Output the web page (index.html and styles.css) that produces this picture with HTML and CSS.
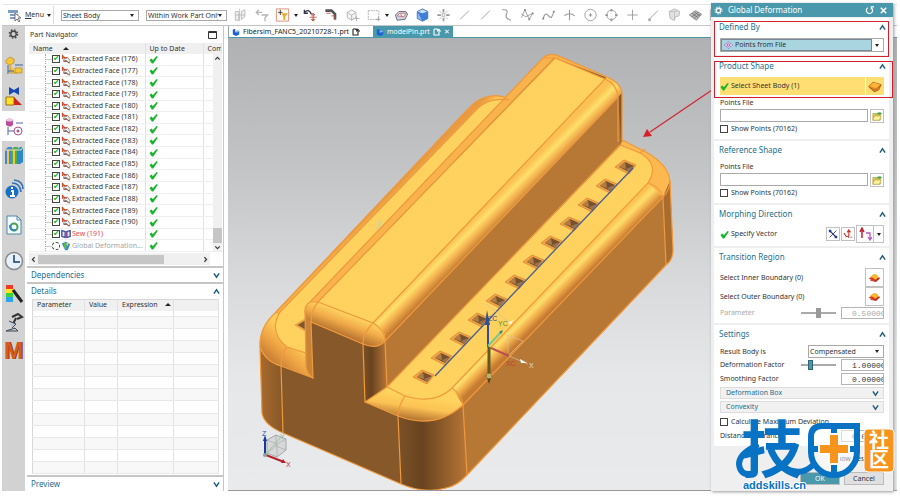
FILE: index.html
```html
<!DOCTYPE html>
<html lang="en">
<head>
    <title>Global Deformation</title>
    <meta charset="UTF-8">
    <link rel="stylesheet" href="styles.css">
</head>
<body>

<!-- shared icons -->
<svg class="defs" aria-hidden="true">
    <symbol id="tick" viewBox="0 0 10 10"><path d="M.5 5.500 3 4 4.200 5.800 8.500 1 9.800 2 4.700 9.500 3.200 9.500Z" fill="#17b52b"/></symbol>
    <symbol id="face" viewBox="0 0 12 12"><path d="M4 5 8 4 11 8 10 11 7 8 3 8Z" fill="#eee" stroke="#777"/><path d="M2 1v5M1 2l3 1M3 4l4 1" stroke="#d8442b" stroke-width="1.5" fill="none"/><path d="M5 8l5 3M3 9h3" stroke="#8a4a3a"/></symbol>
    <symbol id="up" viewBox="0 0 8 8"><path d="M1 6.5 4 2 7 6.5" fill="none" stroke="#205c7c" stroke-width="1.6"/></symbol>
    <symbol id="down" viewBox="0 0 8 8"><path d="M1 1.5 4 6 7 1.5" fill="none" stroke="#205c7c" stroke-width="1.6"/></symbol>
    <symbol id="folder" viewBox="0 0 12 12"><path d="M1 3h4l1 1h4v7H1Z" fill="#d9c84e" stroke="#9a8b2c" stroke-width=".6"/><path d="M3 6h8l-2 5H1Z" fill="#fff29a" stroke="#a69632" stroke-width=".6"/><path d="M5 4q1-3 4-2V1l3 2-3 2V4Q7 3 5 4" fill="#48a33a"/></symbol>
    <symbol id="part" viewBox="0 0 10 10"><path d="M1 2 4 1v4l3-2 2 1v4L5 10 1 8Z" fill="#1e62cf"/><path d="M4 5l3-2 2 1-3 2Z" fill="#8fc0ff"/></symbol>
    <symbol id="page" viewBox="0 0 8 8"><path d="M1 1h3v1M1 1v6h5V4M4 1l2 2H4" fill="none" stroke="currentColor" stroke-width="1.1"/><path d="M5 1l2 1v2" fill="none" stroke="currentColor"/></symbol>
    <symbol id="patch" viewBox="0 0 16 12"><path d="M1 7 6 3l9 3-5 5Z" fill="#d8351f"/><path d="M2 5 7 1q5 0 6 4L9 8Q6 5 2 5" fill="#f8b82d"/><path d="M3 9l6 1 5-4" fill="none" stroke="#a62116"/></symbol>
</svg>

<div class="app">
    <header class="toolbar">
        <button class="menu" type="button">
            <svg width="14" height="13" viewBox="0 0 14 13"><path d="M0 1h10v3H0zM2 5h8v2H2zM2 8h7v2H2z" fill="#7d9dc5"/><path d="M7 4v8l2-2 2 3 1-1-2-3h3Z" fill="#fff" stroke="#555" stroke-width=".8"/></svg>
            <span><u>M</u>enu</span><i class="caret"></i>
        </button>
        <span class="pick type"><select aria-label="Type filter"><option>Sheet Body</option></select></span>
        <span class="pick scope"><select aria-label="Selection scope"><option>Within Work Part Only</option></select></span>
        <nav class="tools" aria-label="Selection tools">
            <svg viewBox="0 0 16 16"><path d="M2 4h4v10H2ZM9 4l4-2v8l-4 3ZM7 1v14M2 8h11" fill="#eee" stroke="#b9b9b9"/></svg>
            <svg viewBox="0 0 16 16"><path d="M2 5h7M5 2 2 5l3 3M8 8h7l-3 3v4" fill="none" stroke="#b5b5b5" stroke-width="1.5"/></svg>
            <svg viewBox="0 0 16 16"><path d="M1 1h14v14H1Z" fill="#fff9ef" stroke="#d78877"/><path d="M3 5h5M5.500 2v6" stroke="#333"/><path d="M7 6h7l-3 4v4l-2-1v-3Z" fill="#eda72c"/></svg>
            <i class="caret"></i>
            <svg viewBox="0 0 16 16"><path d="M1 5q5-5 8 2M1 2v4h4" fill="none" stroke="#334"  stroke-width="1.5"/><path d="M11 6v9M7 10.500h8M11 6l-2 2h4ZM11 15l-2-2h4Z" stroke="#ba4a45" fill="none"/></svg>
            <svg viewBox="0 0 16 16"><path d="M1 3h7l4 4v6" fill="none" stroke="#555" stroke-width="3"/><path d="M8 9h4v5M2 6h5" stroke="#bd5248" fill="none"/></svg>
            <svg viewBox="0 0 16 16"><path d="m2 5 5-3 5 3v6l-5 3-5-3ZM2 5l5 3 5-3M7 8v6" fill="#f2f2f2" stroke="#b1b1b1"/><path d="M9 12h7M12.500 9v6" stroke="#aaa"/></svg>
            <svg viewBox="0 0 16 16"><path d="M2 3h12v10H2Z" fill="none" stroke="#aaa" stroke-dasharray="2 1"/><path d="M11 13h5M13.500 10v5" stroke="#999"/></svg>
            <i class="caret"></i>
            <svg viewBox="0 0 16 16"><path d="m1 8 4-4h8l2 3-3 6-9 1Z" fill="#ccd2dd" stroke="#667"/><path d="m3 9 3-3h7l-2 4ZM7 7l2 3" fill="#eee" stroke="#c07070"/></svg>
            <svg viewBox="0 0 16 16"><path d="m2 4 6-3 6 3v8l-6 3-6-3Z" fill="#8eb8f4" stroke="#416bb6"/><path d="m2 4 6 2 6-2v8l-6 3Z" fill="#417ed7"/><path d="m3 4 5-2 5 2-5 2Z" fill="#cde1ff"/></svg>
            <svg viewBox="0 0 16 16"><path d="M8 1v4M8 11v4M1 8h4M11 8h4" stroke="#999" stroke-width="2"/><path d="M3 3l3 3M13 3l-3 3M3 13l3-3M13 13l-3-3" stroke="#bbb"/><path d="M6.500 6.500h3v3h-3Z" fill="none" stroke="#aaa"/></svg>
            <svg viewBox="0 0 16 16"><path d="M3 13 13 3" stroke="#999"/></svg>
            <svg viewBox="0 0 16 16"><path d="M3 13 13 3" stroke="#999"/></svg>
            <svg viewBox="0 0 16 16"><path d="M3 2h3q4 0 2 5t5 7" fill="none" stroke="#999" stroke-width="1.300"/></svg>
            <svg viewBox="0 0 16 16"><path d="M1 11 5 2l5 11 4-7M1 7l5 3 8-4" fill="none" stroke="#999"/><path d="M4 1h2v2H4ZM9 12h2v2H9ZM13 5h2v2h-2Z" fill="#888"/></svg>
            <svg viewBox="0 0 16 16"><path d="M2 12q2-8 6-3t6-5" fill="none" stroke="#999" stroke-width="1.300"/><path d="M1 11h2v2H1ZM13 3h2v2h-2Z" fill="#888"/></svg>
            <svg viewBox="0 0 16 16"><path d="M2 9q6-5 12 0M8 2v12" fill="none" stroke="#999" stroke-width="1.200"/></svg>
            <svg viewBox="0 0 16 16"><circle cx="8" cy="8" r="6.500" fill="none" stroke="#999"/><path d="M6 8h4M8 6v4" stroke="#888"/></svg>
            <svg viewBox="0 0 16 16"><circle cx="8" cy="8" r="5.500" fill="none" stroke="#999"/><path d="M7 1h2v3H7ZM7 12h2v3H7ZM1 7h3v2H1ZM12 7h3v2h-3Z" fill="#999"/></svg>
            <svg viewBox="0 0 16 16"><path d="M2 8h12M8 2v12" stroke="#999"/></svg>
            <svg viewBox="0 0 16 16"><path d="M3 13 13 3" stroke="#999"/><path d="M2 12h3v3H2Z" fill="#aaa"/></svg>
            <svg viewBox="0 0 16 16"><path d="M2 4 8 1l6 3-1 5-4 1-1 4-5-2Z" fill="#e2e2e2" stroke="#b5b5b5"/><path d="M3 4q6 1 9-1M8 5v9" fill="none" stroke="#bbb"/></svg>
            <svg viewBox="0 0 16 16"><path d="m1 8 7-5 7 4-6 7Z" fill="#bbb" stroke="#888"/><path d="m4 6 7 5M6 4l7 5M4 10l7-5M6 12l7-5" stroke="#777"/></svg>
            <svg viewBox="0 0 16 16"><path d="M1 2h9v12H1ZM1 6h9M1 10h9" fill="#eee" stroke="#aaa"/></svg>
        </nav>
    </header>

    <main class="workspace">
        <nav class="rail" aria-label="Resource bar">
            <button type="button" class="gear" aria-label="Settings"><svg viewBox="0 0 20 20"><circle cx="10" cy="10" r="5" fill="none" stroke="#444" stroke-width="2.500"/><circle cx="10" cy="10" r="7.500" fill="none" stroke="#444" stroke-width="2.500" stroke-dasharray="3 2.890"/></svg></button>
            <button type="button" aria-label="Assembly Navigator"><svg viewBox="0 0 20 20"><path d="m2 4 4-3 4 2v4L6 9 2 7ZM6 9v8h7M11 12h7v5h-7Z" fill="#f5c53a" stroke="#b98a1e" stroke-width=".7"/><path d="M4 9v9M4 15h6M11 9h8" stroke="#3c60a8" fill="none"/></svg></button>
            <button type="button" aria-label="Constraint Navigator"><svg viewBox="0 0 20 20"><path d="M5 1v8l5-3 5 3V1l-5 3Z" fill="#1747b5"/><path d="M2 11h8v8H2Z" fill="#ffe328" stroke="#986e10"/><path d="m10 11 8 8h-8Z" fill="#cf2720"/></svg></button>
            <button type="button" class="on" aria-label="Part Navigator"><svg viewBox="0 0 20 20"><path d="M2 4q4-3 7 0v5q-3 3-7 0Z" fill="#bb4c9c"/><ellipse cx="5.500" cy="4" rx="3.500" ry="1.500" fill="#eec5df"/><path d="M4 11v8M4 15h6M12 7h7" stroke="#5264a5" fill="none"/><circle cx="14" cy="15" r="4" fill="#fff" stroke="#b0508f"/><circle cx="14" cy="15" r="1.500" fill="#b0508f"/></svg></button>
            <button type="button" aria-label="Reuse Library"><svg viewBox="0 0 20 20"><path d="m1 4 3-3h4v17H1Z" fill="#4384d3"/><path d="m7 4 3-3h4v17H7Z" fill="#4eae4d"/><path d="m13 4 3-3h3v15l-3 2h-3Z" fill="#2d8bc3"/><path d="M4 4v14M10 4v14" stroke="#f5c73c" stroke-width="2"/><path d="M1 4h16l2-3" stroke="#ffe5a1" fill="none"/></svg></button>
            <button type="button" class="tall" aria-label="HD3D Tools"><svg viewBox="0 0 20 20"><circle cx="8" cy="13" r="6.500" fill="#1770c6"/><path d="M8 8v2M7 12h2v5M6 17h5" stroke="#fff" stroke-width="2" fill="none"/><path d="M8 4q8 0 9 9M10 1q9 1 9 9" fill="none" stroke="#3472b7" stroke-width="1.700"/></svg></button>
            <button type="button" class="tall" aria-label="Web Browser"><svg viewBox="0 0 20 20"><path d="M3 1h10l4 4v14H3Z" fill="#f4f9fc" stroke="#4d89a8"/><path d="M13 1v4h4" fill="none" stroke="#4d89a8"/><circle cx="10" cy="12" r="3.500" fill="none" stroke="#4ba15b" stroke-width="2"/><path d="M6 10q0 6 6 5" fill="none" stroke="#3786bc" stroke-width="2"/></svg></button>
            <button type="button" class="tall" aria-label="History"><svg viewBox="0 0 20 20"><circle cx="10" cy="10" r="8.500" fill="#e7f1fa" stroke="#888" stroke-width="1.500"/><path d="M10 4v7h6" stroke="#1d3966" fill="none" stroke-width="1.500"/></svg></button>
            <button type="button" class="low" aria-label="System Materials"><svg viewBox="0 0 20 20"><path d="M2 1h7v4H2Z" fill="#ef3b25"/><path d="M2 5h7v4H2Z" fill="#ffe622"/><path d="M2 9h7v4H2Z" fill="#39d53a"/><path d="M2 13h7v5H2Z" fill="#27a8ec"/><path d="m9 6 9 12" stroke="#222" stroke-width="3"/></svg></button>
            <button type="button" class="low" aria-label="Process Studio"><svg viewBox="0 0 20 20"><path d="m8 4 6-3 4 3-5 2M12 5l-3 6" fill="none" stroke="#333" stroke-width="2"/><path d="M5 8l7 3-4 4M2 18l9-3 3 3Z" fill="#b9cad8" stroke="#445"/></svg></button>
            <button type="button" class="logo low" aria-label="Manufacturing"><span>M</span></button>
        </nav>

        <section class="navigator">
            <div class="panel">
                <h2 class="caption">Part Navigator <svg width="9" height="8" viewBox="0 0 9 8"><path d="M.5.500h8v7h-8ZM1 1.500h7" fill="none" stroke="#333"/></svg></h2>
                <div class="tree-box">
                    <table class="tree">
                        <thead><tr><th class="c-name">Name <i class="sort"></i></th><th class="c-date">Up to Date</th><th>Com</th></tr></thead>
                        <tbody>
                            <tr><td><label><input type="checkbox" checked><svg><use href="#face"/></svg>Extracted Face (176)</label></td><td><svg><use href="#tick"/></svg></td><td></td></tr>
                            <tr><td><label><input type="checkbox" checked><svg><use href="#face"/></svg>Extracted Face (177)</label></td><td><svg><use href="#tick"/></svg></td><td></td></tr>
                            <tr><td><label><input type="checkbox" checked><svg><use href="#face"/></svg>Extracted Face (178)</label></td><td><svg><use href="#tick"/></svg></td><td></td></tr>
                            <tr><td><label><input type="checkbox" checked><svg><use href="#face"/></svg>Extracted Face (179)</label></td><td><svg><use href="#tick"/></svg></td><td></td></tr>
                            <tr><td><label><input type="checkbox" checked><svg><use href="#face"/></svg>Extracted Face (180)</label></td><td><svg><use href="#tick"/></svg></td><td></td></tr>
                            <tr><td><label><input type="checkbox" checked><svg><use href="#face"/></svg>Extracted Face (181)</label></td><td><svg><use href="#tick"/></svg></td><td></td></tr>
                            <tr><td><label><input type="checkbox" checked><svg><use href="#face"/></svg>Extracted Face (182)</label></td><td><svg><use href="#tick"/></svg></td><td></td></tr>
                            <tr><td><label><input type="checkbox" checked><svg><use href="#face"/></svg>Extracted Face (183)</label></td><td><svg><use href="#tick"/></svg></td><td></td></tr>
                            <tr><td><label><input type="checkbox" checked><svg><use href="#face"/></svg>Extracted Face (184)</label></td><td><svg><use href="#tick"/></svg></td><td></td></tr>
                            <tr><td><label><input type="checkbox" checked><svg><use href="#face"/></svg>Extracted Face (185)</label></td><td><svg><use href="#tick"/></svg></td><td></td></tr>
                            <tr><td><label><input type="checkbox" checked><svg><use href="#face"/></svg>Extracted Face (186)</label></td><td><svg><use href="#tick"/></svg></td><td></td></tr>
                            <tr><td><label><input type="checkbox" checked><svg><use href="#face"/></svg>Extracted Face (187)</label></td><td><svg><use href="#tick"/></svg></td><td></td></tr>
                            <tr><td><label><input type="checkbox" checked><svg><use href="#face"/></svg>Extracted Face (188)</label></td><td><svg><use href="#tick"/></svg></td><td></td></tr>
                            <tr><td><label><input type="checkbox" checked><svg><use href="#face"/></svg>Extracted Face (189)</label></td><td><svg><use href="#tick"/></svg></td><td></td></tr>
                            <tr><td><label><input type="checkbox" checked><svg><use href="#face"/></svg>Extracted Face (190)</label></td><td><svg><use href="#tick"/></svg></td><td></td></tr>
                            <tr class="sew"><td><label><input type="checkbox" checked><svg viewBox="0 0 12 12"><path d="M1 2 5 3v7L1 9ZM11 2 7 3v7l4-1Z" fill="#dce4ff" stroke="#34439c" stroke-width="1.500"/><path d="M6 3v7" stroke="#c43a4c"/></svg>Sew (191)</label></td><td><svg><use href="#tick"/></svg></td><td></td></tr>
                            <tr class="pending"><td><label><input type="checkbox"><svg viewBox="0 0 12 12"><path d="M1 3 6 1l5 3-3 7H5Z" fill="#3c8fc4"/><path d="m4 2 3 1-1 7-3-3Z" fill="#5bb84a"/><path d="m6 3 3-1-1 4Z" fill="#f1dc3b"/></svg>Global Deformation...</label></td><td><svg><use href="#tick"/></svg></td><td></td></tr>
                        </tbody>
                    </table>
                    <div class="vbar"><svg viewBox="0 0 8 8"><path d="m2 5 2-2 2 2" fill="none" stroke="#333"/></svg><span class="grip"></span><svg viewBox="0 0 8 8"><path d="m2 3 2 2 2-2" fill="none" stroke="#333"/></svg></div>
                </div>
                <div class="hbar"><svg viewBox="0 0 8 8"><path d="M5 2 3 4l2 2" fill="none" stroke="#333"/></svg><span class="grip"></span><svg viewBox="0 0 8 8"><path d="m3 2 2 2-2 2" fill="none" stroke="#333"/></svg></div>
            </div>
            <h2 class="fold">Dependencies <svg><use href="#down"/></svg></h2>
            <div class="details">
                <h2 class="fold">Details <svg><use href="#up"/></svg></h2>
                <table class="params">
                    <thead><tr><th class="c-par">Parameter</th><th class="c-val">Value</th><th class="c-exp">Expression <i class="sort"></i></th><th></th></tr></thead>
                    <tbody>
                        <tr><td></td><td></td><td></td><td></td></tr>
                        <tr><td></td><td></td><td></td><td></td></tr>
                        <tr><td></td><td></td><td></td><td></td></tr>
                        <tr><td></td><td></td><td></td><td></td></tr>
                        <tr><td></td><td></td><td></td><td></td></tr>
                        <tr><td></td><td></td><td></td><td></td></tr>
                        <tr><td></td><td></td><td></td><td></td></tr>
                        <tr><td></td><td></td><td></td><td></td></tr>
                        <tr><td></td><td></td><td></td><td></td></tr>
                        <tr><td></td><td></td><td></td><td></td></tr>
                        <tr><td></td><td></td><td></td><td></td></tr>
                        <tr><td></td><td></td><td></td><td></td></tr>
                        <tr><td></td><td></td><td></td><td></td></tr>
                        <tr><td></td><td></td><td></td><td></td></tr>
                    </tbody>
                </table>
            </div>
            <h2 class="fold">Preview <svg><use href="#down"/></svg></h2>
        </section>

        <section class="view">
            <div class="tabs">
                <a class="tab" href="#"><svg><use href="#part"/></svg>Fibersim_FANC5_20210728-1.prt<svg><use href="#page"/></svg></a>
                <a class="tab on" href="#"><svg><use href="#part"/></svg>modelPin.prt<svg><use href="#page"/></svg><span class="x">✕</span></a>
            </div>
            <svg class="scene" viewBox="228 38 669 453" preserveAspectRatio="xMinYMin slice">
                <defs>
                    <linearGradient id="g-ridge" gradientUnits="userSpaceOnUse" x1="423" y1="270" x2="438" y2="285"><stop offset="0" stop-color="#fbc152"/><stop offset=".3" stop-color="#ffe06d"/><stop offset=".6" stop-color="#f4b24f"/><stop offset="1" stop-color="#c57b31"/></linearGradient>
                    <linearGradient id="g-base" gradientUnits="userSpaceOnUse" x1="565" y1="270" x2="578" y2="283"><stop offset="0" stop-color="#fbc152"/><stop offset=".3" stop-color="#ffe06d"/><stop offset=".65" stop-color="#f0ab4a"/><stop offset="1" stop-color="#c57b31"/></linearGradient>
                    <linearGradient id="g-left" gradientUnits="userSpaceOnUse" x1="313" y1="270" x2="319" y2="276"><stop offset="0" stop-color="#e89a40"/><stop offset="1" stop-color="#fdc250"/></linearGradient>
                    <linearGradient id="g-front" gradientUnits="userSpaceOnUse" x1="346" y1="312" x2="338" y2="333"><stop offset="0" stop-color="#ffd763"/><stop offset=".5" stop-color="#f1ab49"/><stop offset="1" stop-color="#b97531"/></linearGradient>
                    <linearGradient id="g-lip" gradientUnits="userSpaceOnUse" x1="424" y1="396" x2="420" y2="423"><stop offset="0" stop-color="#ffd45e"/><stop offset=".45" stop-color="#fcc254"/><stop offset="1" stop-color="#a7672b"/></linearGradient>
                    <linearGradient id="g-nose" gradientUnits="userSpaceOnUse" x1="290" y1="335" x2="268" y2="360"><stop offset="0" stop-color="#ffcd5a"/><stop offset=".5" stop-color="#efa544"/><stop offset="1" stop-color="#c37b34"/></linearGradient>
                    <linearGradient id="g-corner" x1="0" x2="1"><stop offset="0" stop-color="#7c5227"/><stop offset=".35" stop-color="#68431f"/><stop offset="1" stop-color="#b87636"/></linearGradient>
                    <linearGradient id="g-lcorner" x1="0" x2="1"><stop offset="0" stop-color="#a96a2d"/><stop offset="1" stop-color="#855828"/></linearGradient>
                    <g id="hole"><path d="M-11 0-2-7 10-2 3 7Z" fill="#eda54a" stroke="#e58f38"/><path d="M-7 0-1-5 8-1 3 5Z" fill="#76502c"/><path d="M-7 0-1-5 0 2Z" fill="#b47d3f"/><path d="M0 2 8-1 3 5Z" fill="#9a7352"/></g>
                </defs>

                <!-- base block -->
                <path d="M260 347 262 413Q264 425 283 433L401 484Q424 494 446 488 457 486 467 475L666 265Q673 260 673 250L670 182Q669 163 640 149L622 140 507 98Q485 90 467 110L275 313Q259 328 260 347Z" fill="#87592a"/>
                <path d="M463 405 663 197 666 265 467 475Z" fill="#b87835"/>
                <path d="M663 197 670 180 673 250Q673 260 666 265Z" fill="#a96c2f"/>
                <path d="M398 416Q430 430 463 405L467 475Q457 486 446 488 424 494 401 484Z" fill="url(#g-corner)"/>
                <path d="M260 347Q266 362 281 366L283 433Q264 425 262 413Z" fill="url(#g-lcorner)"/>

                <!-- left shelf -->
                <path d="M260 347Q259 328 275 313L467 110Q485 90 507 98L540 110 330 378 281 366Q263 360 260 347Z" fill="url(#g-left)"/>
                <path d="M260 347Q259 328 275 313L282 312Q268 330 287 347L313 355V378L281 366Q263 360 260 347Z" fill="url(#g-nose)"/>
                <path d="M478 108Q490 97 510 100L500 112 312 312V354L287 347Q268 333 280 312Z" fill="#ffd25f"/>
                <path d="M296 325 306 319V331Z" fill="#7d552c" stroke="#e9a047" stroke-width="2"/>

                <!-- right shelf -->
                <path d="M387 387 620 140 640 149Q669 163 670 180L663 197 463 405Q435 430 398 416L365 402Z" fill="url(#g-base)"/>
                <path d="M387 387 405 396Q435 405 452 388L463 405Q435 430 398 416L365 402Z" fill="url(#g-lip)"/>
                <path d="M622 140 640 149Q669 163 670 180L663 197 648 183Q660 168 640 153L620 145Z" fill="#fdb950"/>
                <path d="M387 387 620 145 640 153Q660 164 648 183L452 388Q435 405 405 396Z" fill="#ffd25f"/>

                <!-- ridge -->
                <path d="M305 313Q304 306 310 302L543 58Q550 52 559 56L607 77Q621 83 622 93V142L387 387 365 402 313 378Q307 374 306 367Z" fill="#87592a"/>
                <path d="M385 341 618 95 621 145 387 387Z" fill="#b87835"/>
                <path d="M363 344Q374 350 385 341L387 387 365 402Z" fill="url(#g-corner)"/>
                <path d="M305 313 311 322 313 378Q307 374 306 367Z" fill="#c98537"/>
                <path d="M305 313Q304 306 310 302L543 58 555 57 318 302Z" fill="#f8b34c"/>
                <path d="M543 58Q550 52 559 56L607 77Q621 83 622 93L605 77 555 58Z" fill="#f8b34c"/>
                <path d="M373 323 607 77Q621 83 622 93L618 97 385 341Q379 346 373 347Z" fill="url(#g-ridge)"/>
                <path d="M310 302 318 302 373 323Q387 330 385 341 375 350 363 344L311 322Q305 318 305 313 305 305 310 302Z" fill="url(#g-front)"/>
                <path d="M318 302 555 58 605 79 373 323Z" fill="#ffd25f"/>

                <g fill="none" stroke="#f0993d" stroke-width="1.200">
                    <path d="M260 347 262 413Q264 425 283 433L401 484Q424 494 446 488 457 486 467 475L666 265Q673 260 673 250L670 182Q669 163 640 149L622 140"/>
                    <path d="M507 98Q485 90 467 110L275 313Q259 328 260 347 266 362 281 366L313 378M281 366 283 433M281 366Q281 354 287 347M275 313 280 313"/>
                    <path d="M510 100Q490 97 478 108L280 312Q268 332 287 347L306 353M467 110 478 108"/>
                    <path d="M365 402 398 416Q435 430 463 405L663 197Q670 190 670 180M398 416 401 484M463 405 467 475M663 197 666 265"/>
                    <path d="M387 387 405 396Q435 405 452 388L648 183Q660 164 640 153L620 145M405 396Q399 404 398 416M452 388Q462 395 463 405M648 183Q660 187 663 197M640 153 645 149"/>
                    <path d="M305 313Q304 306 310 302L543 58Q550 52 559 56L607 77Q621 83 622 93V142M305 313 306 367Q307 374 313 378L311 322 363 344Q377 350 385 341L618 97V142M363 344 365 402 387 387 385 341M387 387 620 145"/>
                    <path d="M310 302 318 302 373 323 605 79 555 58 318 302Q311 310 311 322M373 323Q363 333 363 344M373 323Q385 330 385 341M605 79Q617 84 618 97M543 58 555 58"/>
                </g>

                <use href="#hole" x="626" y="167"/><use href="#hole" x="607" y="186"/><use href="#hole" x="589" y="205"/>
                <use href="#hole" x="571" y="224"/><use href="#hole" x="552" y="243"/><use href="#hole" x="534" y="262"/>
                <use href="#hole" x="516" y="282"/><use href="#hole" x="497" y="301"/><use href="#hole" x="479" y="320"/>
                <use href="#hole" x="461" y="339"/><use href="#hole" x="442" y="358"/><use href="#hole" x="424" y="377"/>
                <path d="M633 168 435 376" stroke="#4a5f8f" stroke-width="1.300"/>
                <path d="M376 230 379 219 382 222 379 229Z" fill="#d9d38c"/>

                <!-- work coordinate system -->
                <path d="M488 347V318" stroke="#30508f" stroke-width="2"/><path d="M487 310 490 325H485Z" fill="#30508f"/>
                <path d="M488 346 502 331" stroke="#77c98c" stroke-width="2"/><path d="M503 330l-4 2 2 2Z" fill="#19857c"/>
                <path d="M491 348 509 356" stroke="#bd4e51" stroke-width="2"/><path d="M509 356 528 364M507 335 523 341 509 355M508 335V353M486 304 510 323" fill="none" stroke="#d9c0a0" stroke-width=".7"/>
                <path d="m520 359 7 4-6 0ZM508 323l5-3-2 4Z" fill="#fff"/>
                <path d="M489 347V378" stroke="#605a21" stroke-width="3"/><path d="m486 375 3 9 3-9Z" fill="#504719"/><circle cx="489" cy="376" r="2.500" fill="#bfb36a"/>
                <g class="axis"><text x="488" y="321" fill="#2b4c9b">ZC</text><text x="498" y="326" fill="#4d8d2e">YC</text><text x="506" y="366" fill="#c33e34">XC</text><text x="529" y="368" fill="#ddd">X</text></g>

                <!-- view triad -->
                <path d="m267 440 9-5 10 4v11l-9 7-10-4Z" fill="#d5d7d8" stroke="#a5a9ab"/><path d="m267 440 10 4 9-5M277 444v13M267 453l9-7 10 4M276 435v11" fill="none" stroke="#aaa" stroke-width=".7"/>
                <path d="M266 454 281 437" stroke="#99c69b"/>
                <path d="M265 454V439" stroke="#173b9d" stroke-width="2"/><path d="m265 435 2 6h-4Z" fill="#173b9d"/>
                <path d="m266 455 18 7" stroke="#b5202a" stroke-width="2"/><path d="m286 463-5 0 2-4Z" fill="#b5202a"/><circle cx="265" cy="455" r="2" fill="#8ba0a8"/>
                <g class="axis"><text x="262" y="436" fill="#2854b5">Z</text><text x="280" y="439" fill="#88b988">Y</text><text x="286" y="467" fill="#bb343b">X</text></g>

                <!-- callout arrow -->
                <path d="M712 90 650 132" stroke="#d02530" stroke-width="1.200"/><path d="m643 137 4-8 5 7Z" fill="#d81e29"/>
            </svg>
        </section>
    </main>

    <form class="dialog">
        <h1 class="title">
            <svg viewBox="0 0 10 10"><circle cx="5" cy="5" r="2.500" fill="none" stroke="#fff" stroke-width="1.500"/><circle cx="5" cy="5" r="4" fill="none" stroke="#fff" stroke-dasharray="1.600 1.540"/></svg>
            <span>Global Deformation</span>
            <button type="button" aria-label="Reset"><svg viewBox="0 0 10 10"><path d="M3 2a3.500 3.500 0 1 0 4 0M7 4V1h3" fill="none" stroke="#fff" stroke-width="1.300"/></svg></button>
            <button type="button" aria-label="Close"><svg viewBox="0 0 10 10"><path d="m2 2 6 6M8 2 2 8" stroke="#fff" stroke-width="1.700"/></svg></button>
        </h1>

        <fieldset>
            <h2>Defined By <svg><use href="#up"/></svg></h2>
            <span class="pick method"><svg viewBox="0 0 12 12"><path d="m1 6 5-4 5 4-5 4Z" fill="#e5d7ef" stroke="#8c54a8" stroke-dasharray="2 1"/><circle cx="6" cy="6" r="1.500" fill="none" stroke="#8c54a8"/></svg><select aria-label="Defined By"><option>Points from File</option></select></span>
            <span class="mark first"></span>
        </fieldset>

        <fieldset>
            <h2>Product Shape <svg><use href="#up"/></svg></h2>
            <div class="row sheet"><svg class="ok"><use href="#tick"/></svg><span>Select Sheet Body (1)</span><button type="button" aria-label="Sheet Body"><svg viewBox="0 0 16 14"><path d="m1 7 5-5 9 3-3 6-5 2Z" fill="#ef8c20" stroke="#9c5319"/><path d="m2 6 5-4 7 3-5 4Z" fill="#ffb638"/><path d="m1 8 7 3 6-5" fill="none" stroke="#b46520"/></svg></button></div>
            <label class="cap" for="product-file">Points File</label>
            <div class="row file"><input id="product-file" type="text"><button type="button" aria-label="Browse"><svg><use href="#folder"/></svg></button></div>
            <label class="check"><input type="checkbox">Show Points (70162)</label>
            <span class="mark second"></span>
        </fieldset>

        <fieldset>
            <h2>Reference Shape <svg><use href="#up"/></svg></h2>
            <label class="cap" for="reference-file">Points File</label>
            <div class="row file"><input id="reference-file" type="text"><button type="button" aria-label="Browse"><svg><use href="#folder"/></svg></button></div>
            <label class="check"><input type="checkbox">Show Points (70162)</label>
        </fieldset>

        <fieldset>
            <h2>Morphing Direction <svg><use href="#up"/></svg></h2>
            <div class="row vector">
                <svg class="ok"><use href="#tick"/></svg><span>Specify Vector</span>
                <button type="button" aria-label="Reverse Direction"><svg viewBox="0 0 12 12"><path d="m2 2 8 8" stroke="#223c9c" stroke-width="1.500"/><path d="M2 10 10 2" stroke="#333"/><path d="M1 1h3v3H1ZM8 8h3v3H8Z" fill="#223c9c"/></svg></button>
                <button type="button" aria-label="Vector Dialog"><svg viewBox="0 0 12 12"><path d="M7 9V2M5 4l2-3 2 3M1 5l3 4h3" fill="none" stroke="#cd352d" stroke-width="1.400"/><path d="M6 10h6" stroke="#333" stroke-dasharray="1 1"/></svg></button>
                <button type="button" class="wide" aria-label="Inferred Vector"><svg viewBox="0 0 14 14"><path d="M4 11V3M2 5l2-4 2 4" fill="none" stroke="#bd2631" stroke-width="1.500"/><path d="M8 6h4v6M10 10l2 3 2-3" fill="none" stroke="#b657bb" stroke-width="1.300"/></svg></button>
                <button type="button" class="slim" aria-label="More vectors"><i class="caret"></i></button>
            </div>
        </fieldset>

        <fieldset>
            <h2>Transition Region <svg><use href="#up"/></svg></h2>
            <div class="row bound"><span>Select Inner Boundary (0)</span><button type="button" aria-label="Inner Boundary"><svg><use href="#patch"/></svg></button></div>
            <div class="row bound"><span>Select Outer Boundary (0)</span><button type="button" aria-label="Outer Boundary"><svg><use href="#patch"/></svg></button></div>
            <div class="row num off"><label for="param">Parameter</label><input type="range" aria-label="Parameter slider" value="50" disabled><input id="param" type="text" value="0.50000" disabled></div>
        </fieldset>

        <fieldset class="settings">
            <h2>Settings <svg><use href="#up"/></svg></h2>
            <div class="row"><label for="result">Result Body is</label><span class="pick result"><select id="result"><option>Compensated</option></select></span></div>
            <div class="row num"><label for="deform">Deformation Factor</label><input type="range" aria-label="Deformation slider" value="22"><input id="deform" type="text" value="1.00000"></div>
            <div class="row num"><label for="smooth">Smoothing Factor</label><input id="smooth" type="text" value="0.00000"></div>
            <button type="button" class="group">Deformation Box <svg><use href="#down"/></svg></button>
            <button type="button" class="group">Convexity <svg><use href="#down"/></svg></button>
            <label class="check"><input type="checkbox">Calculate Maximum Deviation</label>
            <div class="row num"><label for="tol">Distance Tolerance</label><input id="tol" type="text" value="0.00100"></div>
        </fieldset>

        <div class="show">Show Result</div>
        <div class="actions"><button type="button" class="primary">OK</button><button type="button">Cancel</button></div>
    </form>

    <svg class="brand" viewBox="734 418 164 74">
        <path d="M756 446Q739 454 739 464 740 475 750 474M782 466Q800 478 813 465" fill="none" stroke="#0872c4" stroke-width="6" stroke-linecap="round"/>
        <text class="ji" x="741" y="473">技</text>
        <path d="M822 426H857V452A23 23 0 1 1 811 452V437Q811 426 822 426Z" fill="#fff" fill-opacity=".5" stroke="#0872c4" stroke-width="6"/>
        <path d="M834 426V474M811 449H857" stroke="#0872c4" stroke-width="6"/>
        <path d="M834 433V465M818 449H850" stroke="#fff" stroke-width="12"/>
        <path d="M834 435V463M820 449H848" stroke="#f7941e" stroke-width="8"/>
        <rect x="864" y="429" width="30" height="43" rx="4" fill="#f7941e" stroke="#fff"/>
        <text class="she" x="869" y="448">社</text><text class="she" x="869" y="467">区</text>
        <text class="site" x="743" y="489">addskills.cn</text>
    </svg>
</div>

</body>
</html>
```

FILE: styles.css
```css
* {
    box-sizing: border-box;
}

body {
    margin: 0;
    background: #fff;
    color: #333;
    font-family: "Noto Sans", "Open Sans", sans-serif;
    font-size: 7px;
    line-height: 10px;
}

button, input, select {
    margin: 0;
    padding: 0;
    border: 0;
    border-radius: 0;
    background: none;
    color: inherit;
    font: inherit;
}

h1, h2 {
    margin: 0;
    font-size: 8px;
    font-weight: normal;
    display: flex;
    align-items: center;
    justify-content: space-between;
}

svg {
    flex: none;
}

.defs {
    position: absolute;
    width: 0;
    height: 0;
}

.app {
    position: relative;
    min-height: 100vh;
    display: flex;
    flex-direction: column;
    padding: 4px 3px 5px 2px;
}

.caret, .sort {
    display: inline-block;
    border: 2px solid transparent;
    border-top: 3px solid #222;
    border-bottom: 0;
}

.sort {
    border: 3px solid transparent;
    border-bottom: 3px solid #222;
    border-top: 0;
    margin: 0 0 1px 8px;
}

/* toolbar */
.toolbar {
    height: 22px;
    display: flex;
    align-items: center;
    border-top: 1px solid #e6e6e6;
    border-bottom: 1px solid #c4c4c4;
    overflow: hidden;
}

.menu {
    display: flex;
    align-items: center;
    gap: 3px;
    width: 52px;
    height: 18px;
    padding-left: 6px;
    border-right: 1px solid #ddd;
}

.pick {
    position: relative;
    display: flex;
    align-items: center;
    background: #fff;
    border: 1px solid #aaa;
}

.pick select {
    appearance: none;
    flex: 1;
    width: 100%;
    height: 100%;
    padding-left: 1px;
}

.pick::after {
    content: "";
    position: absolute;
    right: 4px;
    border: 2px solid transparent;
    border-top: 3px solid #222;
    border-bottom: 0;
    pointer-events: none;
}

.type, .scope {
    height: 11px;
    margin-left: 7px;
    width: 78px;
}

.scope {
    width: 81px;
    padding-right: 8px;
}

.tools {
    display: flex;
    align-items: center;
    margin-left: 3px;
}

.tools svg {
    width: 21px;
    height: 14px;
}

.tools .caret {
    margin: 0 2px 0 1px;
}

.workspace {
    flex: 1;
    display: grid;
    grid-template-columns: 23px 199px 1fr;
}

/* resource bar */
.rail {
    display: flex;
    flex-direction: column;
    background: #d2d2d2;
}

.rail button {
    height: 30px;
    display: flex;
    align-items: center;
    justify-content: center;
}

.rail svg {
    width: 20px;
    height: 20px;
}

.rail .gear {
    height: 16px;
    margin-bottom: 9px;
}

.rail .gear svg {
    width: 11px;
}

.rail .on {
    background: #fff;
}

.rail .tall {
    height: 36px;
}

.rail .low {
    height: 29px;
}

.rail .logo {
    color: #d85a1c;
    font: bold 23px "Liberation Sans", sans-serif;
    text-shadow: 1px 0 #7f2b12;
}

/* part navigator */
.navigator {
    display: flex;
    flex-direction: column;
    padding-left: 2px;
    border-right: 1px solid #c8c8c8;
}

.panel {
    padding-right: 1px;
    border-bottom: 2px solid #c6c6c6;
}

.caption {
    height: 17px;
    padding: 0 5px 0 3px;
    font-size: 7px;
}

.tree-box {
    position: relative;
    margin-left: 2px;
}

table {
    width: 100%;
    border-collapse: collapse;
    table-layout: fixed;
}

th, td {
    padding: 0;
    border-right: 1px solid #e2e2e2;
    white-space: nowrap;
    overflow: hidden;
    text-align: left;
    font-weight: normal;
}

th {
    height: 11px;
    padding-left: 4px;
    line-height: 10px;
    background: #f0f0f0;
}

.tree {
    height: 209px;
}

.tree .c-name {
    width: 116px;
}

.tree .c-date {
    width: 58px;
}

.tree td {
    border-bottom: 1px solid #efefef;
    line-height: 10px;
}

.tree td + td {
    padding-left: 3px;
}

.tree td svg {
    display: block;
    width: 9px;
    height: 9px;
}

.tree label {
    display: flex;
    align-items: center;
    height: 10px;
    margin-left: 16px;
}

.tree label::before {
    content: "";
    width: 6px;
    height: 10px;
    border-left: 1px dotted #aaa;
    background: linear-gradient(#ccc, #ccc) 0 5px / 6px 1px no-repeat;
}

.tree label svg {
    width: 10px;
    height: 10px;
    margin: 0 1px;
}

input[type=checkbox] {
    appearance: none;
    flex: none;
    width: 8px;
    height: 8px;
    border: 1px solid #444;
    background: #fff;
}

input[type=checkbox]:checked::after {
    content: "✔";
    display: block;
    color: #12b52c;
    font: 8px/6px "DejaVu Sans", sans-serif;
}

.sew {
    color: #f04848;
}

.pending {
    color: #a5a5a5;
}

.pending input {
    border-style: dashed;
    border-radius: 4px;
}

.vbar {
    position: absolute;
    top: 11px;
    right: 0;
    bottom: 0;
    width: 9px;
    display: flex;
    flex-direction: column;
    background: #f0f0f0;
}

.vbar svg, .hbar svg {
    width: 9px;
    height: 9px;
}

.vbar .grip {
    height: 15px;
    margin-top: auto;
    background: #c6c6c6;
}

.hbar {
    height: 12px;
    display: flex;
    align-items: center;
    margin: 1px 12px 1px 2px;
    background: #f0f0f0;
}

.hbar .grip {
    width: 126px;
    height: 9px;
    margin-right: auto;
    background: #c6c6c6;
}

.fold {
    height: 14px;
    padding: 0 3px 0 4px;
    color: #23708f;
}

.fold svg, .dialog h2 svg, .group svg {
    width: 7px;
    height: 7px;
}

.details {
    flex: 1;
    display: flex;
    flex-direction: column;
    border-top: 2px solid #c6c6c6;
    border-bottom: 2px solid #c6c6c6;
}

.params {
    flex: 1;
    height: 175px;
    margin: 1px 4px 1px 5px;
    width: auto;
    border: 1px solid #d8d8d8;
}

.params .c-par {
    width: 52px;
}

.params .c-val {
    width: 33px;
}

.params .c-exp {
    width: 56px;
}

.params .sort {
    margin-left: 5px;
}

.params td {
    border-bottom: 1px solid #e8e8e8;
}

.params tr:nth-child(even) td {
    background: #f8f8f8;
}

/* graphics window */
.view {
    display: flex;
    flex-direction: column;
    margin-left: 4px;
    min-width: 0;
}

.tabs {
    display: flex;
    height: 12px;
    border-left: 1px solid #9aa;
    border-bottom: 1px solid #4a98ab;
}

.tab {
    display: flex;
    align-items: center;
    gap: 3px;
    width: 144px;
    padding-left: 3px;
    color: #222;
    text-decoration: none;
}

.tab svg {
    width: 8px;
    height: 8px;
}

.tab.on {
    width: 80px;
    background: #4a98ab;
    color: #fff;
}

.scene {
    flex: 1 1 0;
    width: 100%;
    min-height: 0;
    border-bottom: 1px solid #999;
    background: linear-gradient(#b0b1b3, #c4c5c6 30%, #d8d9da 53%, #e5e7e8 75%, #e8eaeb);
}

.axis {
    font: 7px "Liberation Sans", sans-serif;
}

/* dialog */
.dialog {
    position: absolute;
    top: 3px;
    right: 7px;
    width: 182px;
    padding-bottom: 6px;
    background: #efefef;
    box-shadow: 1px 1px 3px #999;
}

.title {
    height: 14px;
    padding: 0 5px 0 3px;
    gap: 5px;
    margin-bottom: 1px;
    background: #4a98ab;
    color: #fff;
}

.title span {
    flex: 1;
}

.title svg {
    display: block;
    width: 9px;
    height: 9px;
}

fieldset {
    position: relative;
    min-width: 0;
    margin: 0 4px 2px 3px;
    padding: 2px 5px 3px 6px;
    border: 0;
    background: #fff;
}

.dialog h2 {
    height: 14px;
    margin: 0 -2px 4px -1px;
    color: #23708f;
}

.method {
    height: 14px;
}

.method svg {
    width: 11px;
    height: 10px;
    margin-left: 2px;
}

.method::before {
    content: "";
    position: absolute;
    inset: 0 11px 0 0;
    background: #a9d5e1;
    border: 1px solid #789;
}

.method svg, .method select {
    position: relative;
}

.mark {
    position: absolute;
    left: 0;
    border: 1px solid #d0202c;
    pointer-events: none;
}

.first {
    top: 3px;
    right: 0;
    height: 36px;
}

.second {
    top: 4px;
    right: -4px;
    height: 37px;
}

.row {
    display: flex;
    align-items: center;
}

.row > span:not(.pick), .row > label {
    flex: 1;
}

.dialog button {
    display: flex;
    align-items: center;
    justify-content: center;
}

.ok {
    width: 9px;
    height: 9px;
    margin-right: 2px;
}

.sheet {
    height: 18px;
    margin-bottom: 2px;
    background: #ffde73;
}

.sheet button {
    width: 19px;
    height: 18px;
    border-left: 1px solid #fff;
}

.sheet button svg {
    width: 14px;
    height: 13px;
}

.cap {
    display: block;
    height: 12px;
    line-height: 12px;
}

.file {
    gap: 2px;
    height: 13px;
}

.file input {
    flex: 1;
    min-width: 0;
    height: 13px;
    border: 1px solid #aaa;
}

.file button, .vector button, .bound button {
    width: 14px;
    height: 14px;
    border: 1px solid #c2c2c2;
    background: #fff;
}

.file svg, .vector button svg {
    width: 10px;
    height: 10px;
}

.check {
    display: flex;
    align-items: center;
    gap: 3px;
    height: 14px;
}

.vector {
    height: 18px;
}

.vector button {
    margin-left: 1px;
}

.vector .wide {
    width: 18px;
    height: 18px;
}

.vector .wide svg {
    width: 14px;
    height: 14px;
}

.vector .slim {
    width: 10px;
    height: 18px;
    margin-left: 0;
    border-left: 0;
}

.bound {
    height: 19px;
}

.bound button {
    width: 19px;
    height: 19px;
}

.bound svg {
    width: 13px;
    height: 10px;
}

.num {
    height: 14px;
}

.num input[type=text] {
    width: 43px;
    height: 12px;
    padding-left: 10px;
    border: 1px solid #b5b5b5;
    background: #fff;
    font: 8px "Liberation Mono", monospace;
}

input[type=range] {
    appearance: none;
    width: 35px;
    height: 10px;
    margin-right: 5px;
    background: linear-gradient(#aaa, #aaa) 0 4px / 100% 2px no-repeat;
}

input[type=range]::-webkit-slider-thumb {
    appearance: none;
    width: 5px;
    height: 10px;
    border: 1px solid #2d6375;
    background: #4a98ab;
}

.off {
    color: #aaa;
}

.off input[type=range]::-webkit-slider-thumb {
    border-color: #999;
    background: #999;
}

.settings .pick {
    width: 76px;
    height: 13px;
}

.dialog .group {
    width: 100%;
    height: 12px;
    margin: 1px 0 2px;
    padding: 0 4px 0 5px;
    justify-content: space-between;
    border: 1px solid #ddd;
    background: #f1f1f1;
    color: #23708f;
}

.show {
    padding: 6px 20px 0 0;
    text-align: right;
}

.actions {
    display: flex;
    justify-content: flex-end;
    gap: 4px;
    padding: 8px 9px 0 0;
}

.actions button {
    width: 40px;
    height: 13px;
    border: 1px solid #bbb;
    background: #e0e0e0;
}

.actions .primary {
    background: #4a98ab;
    color: #fff;
}

/* site badge */
.brand {
    position: absolute;
    right: 2px;
    bottom: 4px;
    width: 164px;
    height: 74px;
    overflow: visible;
    pointer-events: none;
}

.ji, .she {
    font: 700 62px "Noto Sans CJK SC", sans-serif;
    fill: #0872c4;
}

.she {
    font-size: 20px;
    fill: #fff;
}

.site {
    font: bold 11px "Liberation Sans", sans-serif;
    fill: #0872c4;
    stroke: #fff;
    stroke-width: 2px;
    paint-order: stroke;
}
```
